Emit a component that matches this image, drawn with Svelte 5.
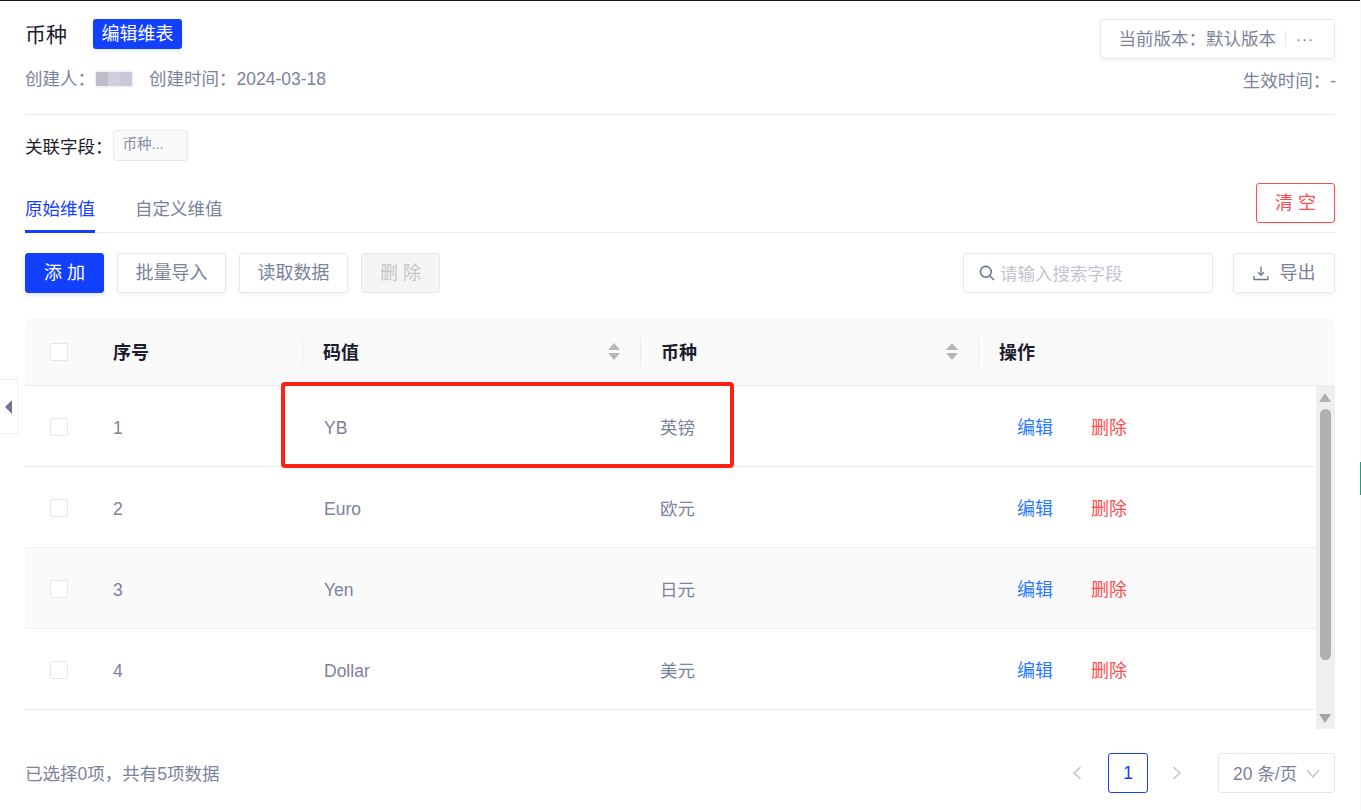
<script lang="ts">
  const rows = [
    { no: 1, code: 'YB', name: '英镑' },
    { no: 2, code: 'Euro', name: '欧元' },
    { no: 3, code: 'Yen', name: '日元' },
    { no: 4, code: 'Dollar', name: '美元' },
  ];
  const hoverRow = 3;
</script>

<div class="page">
  <header class="head">
    <div class="head-left">
      <div class="title-row">
        <h1>币种</h1>
        <span class="tag">编辑维表</span>
      </div>
      <div class="meta">
        <span>创建人：</span>
        <span class="blurred"></span>
        <span class="created">创建时间：2024-03-18</span>
      </div>
    </div>
    <div class="head-right">
      <div class="version">
        <span>当前版本：默认版本</span>
        <i class="version-sep"></i>
        <span class="dots">···</span>
      </div>
      <div class="effective">生效时间：-</div>
    </div>
  </header>

  <div class="relation">
    <span class="relation-label">关联字段：</span>
    <span class="relation-tag">币种...</span>
  </div>

  <div class="tabs">
    <span class="tab active">原始维值</span>
    <span class="tab">自定义维值</span>
    <button class="btn danger">清 空</button>
  </div>

  <div class="toolbar">
    <button class="btn primary">添 加</button>
    <button class="btn batch">批量导入</button>
    <button class="btn batch">读取数据</button>
    <button class="btn disabled">删 除</button>
    <div class="search">
      <svg width="18" height="18" viewBox="0 0 18 18" fill="none" stroke="#6f7590" stroke-width="1.6">
        <circle cx="7.8" cy="7.8" r="5.4" />
        <path d="M11.8 11.8 L16 16" />
      </svg>
      <span class="placeholder">请输入搜索字段</span>
    </div>
    <button class="btn export">
      <svg width="16" height="16" viewBox="0 0 16 16" fill="none" stroke="#6f7590" stroke-width="1.3">
        <path d="M8 1.5 V10 M5 7.3 L8 10.3 L11 7.3 M1 11 V14.5 H15 V11" />
      </svg>
      <span>导出</span>
    </button>
  </div>

  <section class="table">
    <div class="thead">
      <div class="th th-check"><i class="check"></i></div>
      <div class="th th-no"><span class="th-label">序号</span></div>
      <div class="th sep">
        <span class="th-label">码值</span>
        <span class="sort"><i class="up"></i><i class="down"></i></span>
      </div>
      <div class="th sep">
        <span class="th-label">币种</span>
        <span class="sort"><i class="up"></i><i class="down"></i></span>
      </div>
      <div class="th sep"><span class="th-label">操作</span></div>
    </div>
    <div class="tbody">
      <div class="rows">
        {#each rows as r (r.no)}
          <div class="tr" class:hover={r.no === hoverRow}>
            <div class="td-check"><i class="check"></i></div>
            <div class="td-no">{r.no}</div>
            <div class="td-code">{r.code}</div>
            <div class="td-name">{r.name}</div>
            <div class="td-ops">
              <span class="edit">编辑</span>
              <span class="del">删除</span>
            </div>
          </div>
        {/each}
      </div>
      <div class="scrollbar">
        <i class="arrow-up"></i>
        <i class="thumb"></i>
        <i class="arrow-down"></i>
      </div>
    </div>
    <div class="highlight"></div>
  </section>

  <footer class="foot">
    <span class="summary">已选择0项，共有5项数据</span>
    <div class="pager">
      <svg class="chev" width="12" height="16" viewBox="0 0 12 16" fill="none" stroke="#bfbfc4" stroke-width="1.3">
        <path d="M9.5 2 L3 8 L9.5 14" />
      </svg>
      <span class="page-no">1</span>
      <svg class="chev" width="12" height="16" viewBox="0 0 12 16" fill="none" stroke="#bfbfc4" stroke-width="1.3">
        <path d="M2.5 2 L9 8 L2.5 14" />
      </svg>
      <div class="size">
        <span class="size-label">20 条/页</span>
        <svg width="14" height="9" viewBox="0 0 14 9" fill="none" stroke="#bfbfc4" stroke-width="1.2">
          <path d="M1 1 L7 8 L13 1" />
        </svg>
      </div>
    </div>
  </footer>

  <div class="side-toggle"><i></i></div>
  <i class="green-edge"></i>
</div>

<style>
  :global(body) {
    background: #fafafa;
    overflow: hidden;
  }

  .page {
    position: relative;
    box-sizing: border-box;
    width: 1360px;
    height: 810px;
    padding: 18px 25px 0 25px;
    background: #fff;
    border-top: 1px solid #14141e;
    font-family: 'Liberation Sans', 'Noto Sans CJK SC', sans-serif;
    font-size: 17.5px;
    line-height: 26px;
    color: #7c829c;
  }

  .head {
    display: flex;
    justify-content: space-between;
    height: 95px;
    border-bottom: 1px solid #e9e9f2;
  }

  .title-row {
    display: flex;
    align-items: center;
    height: 30px;
    gap: 26px;
  }

  h1 {
    margin: 0;
    padding-top: 2px;
    font-size: 21px;
    font-weight: 400;
    color: #1c1c2b;
  }

  .tag {
    box-sizing: border-box;
    width: 89px;
    height: 30px;
    line-height: 31px;
    font-size: 18px;
    text-align: center;
    background: #1340ff;
    color: #fff;
    border-radius: 3px;
    box-shadow: 0 2px 4px rgba(19, 64, 255, 0.12);
  }

  .meta {
    display: flex;
    align-items: center;
    margin-top: 17px;
  }

  .blurred {
    width: 36px;
    height: 14px;
    margin-left: 1px;
    background: linear-gradient(90deg, #bfbdca 0 12px, #d0d0da 12px 24px, #c8c8d6 24px 36px);
    box-shadow: 0 0 3px rgba(200, 200, 215, 0.7);
  }

  .created {
    margin-left: 17px;
  }

  .head-right {
    display: flex;
    flex-direction: column;
    align-items: flex-end;
  }

  .version {
    box-sizing: border-box;
    display: flex;
    align-items: center;
    justify-content: flex-end;
    width: 235px;
    height: 40px;
    padding-right: 20px;
    border: 1px solid #e6e6f0;
    border-radius: 3px;
    box-shadow: 0 2px 4px rgba(120, 120, 160, 0.08);
  }

  .version-sep {
    width: 1px;
    height: 16px;
    margin: 0 10px 0 9px;
    background: #e6e6ec;
  }

  .dots {
    font-size: 15px;
    letter-spacing: 1px;
    color: #666b85;
  }

  .effective {
    margin-top: 9px;
    margin-right: -1px;
  }

  .relation {
    display: flex;
    align-items: center;
    height: 31px;
    margin-top: 15px;
    color: #1c1c2b;
  }

  .relation-label {
    padding-top: 2px;
  }

  .relation-tag {
    box-sizing: border-box;
    width: 75px;
    height: 31px;
    padding-left: 9px;
    line-height: 27px;
    font-size: 14.5px;
    color: #868ba3;
    background: #fafafa;
    border: 1px solid #e9e9f0;
    border-radius: 3px;
  }

  .tabs {
    position: relative;
    display: flex;
    align-items: flex-end;
    height: 50px;
    margin-top: 21px;
    gap: 40px;
    border-bottom: 1px solid #ececf1;
  }

  .tab {
    height: 36px;
    line-height: 24px;
    margin-bottom: -1px;
    box-sizing: border-box;
  }

  .tab.active {
    color: #1340ff;
    border-bottom: 3px solid #1340ff;
  }

  .btn {
    box-sizing: border-box;
    height: 40px;
    padding: 0;
    font: inherit;
    font-size: 18px;
    border: 1px solid #e6e6f0;
    border-radius: 3px;
    background: #fff;
    color: #7c829c;
    box-shadow: 0 2px 4px rgba(120, 120, 160, 0.08);
  }

  .btn.danger {
    width: 79px;
    margin-left: auto;
    margin-bottom: 9px;
    color: #ff4d4f;
    border-color: #ff4d4f;
  }

  .toolbar {
    display: flex;
    align-items: center;
    margin-top: 20px;
    gap: 13px;
  }

  .btn.primary {
    width: 79px;
    color: #fff;
    background: #1340ff;
    border-color: #1340ff;
    box-shadow: 0 2px 4px rgba(19, 64, 255, 0.15);
  }

  .btn.batch {
    width: 109px;
  }

  .btn.disabled {
    width: 79px;
    color: #c6c6c6;
    background: #f5f5f5;
    box-shadow: none;
  }

  .search {
    box-sizing: border-box;
    display: flex;
    align-items: center;
    gap: 4px;
    width: 250px;
    height: 40px;
    margin-left: auto;
    padding-left: 14px;
    color: #c4c4cc;
    border: 1px solid #e6e6f0;
    border-radius: 3px;
  }

  .placeholder {
    padding-top: 2px;
  }

  .btn.export {
    display: flex;
    align-items: center;
    justify-content: center;
    gap: 11px;
    width: 102px;
    margin-left: 7px;
  }

  .table {
    position: relative;
    margin-top: 25px;
  }

  .thead {
    display: grid;
    grid-template-columns: 63px 215px 338px 338px 356px;
    height: 68px;
    background: #fafafa;
    border-radius: 6px 6px 0 0;
    border-bottom: 1px solid #ededf1;
    box-sizing: border-box;
    font-size: 18px;
    font-weight: 700;
    color: #1c1c2e;
  }

  .th {
    position: relative;
    display: flex;
    align-items: center;
    padding-left: 20px;
  }

  .th-check,
  .th-no {
    padding-left: 25px;
  }

  .th-label {
    padding-top: 2px;
  }

  .sep::before {
    content: '';
    position: absolute;
    left: -1px;
    top: 20px;
    width: 1px;
    height: 28px;
    background: #ececec;
  }

  .sort {
    position: absolute;
    right: 21px;
    top: 25px;
    display: flex;
    flex-direction: column;
    gap: 3px;
  }

  .up,
  .down {
    width: 0;
    height: 0;
    border-left: 6px solid transparent;
    border-right: 6px solid transparent;
  }

  .up {
    border-bottom: 7px solid #b8b8b8;
  }

  .down {
    border-top: 7px solid #b8b8b8;
  }

  .check {
    display: block;
    box-sizing: border-box;
    width: 18px;
    height: 18px;
    background: #fff;
    border: 1px solid #e6e6ea;
    border-radius: 2px;
  }

  .tbody {
    display: flex;
    height: 343px;
  }

  .rows {
    width: 1291px;
  }

  .tr {
    display: grid;
    grid-template-columns: 63px 215px 337px 337px 339px;
    align-items: center;
    box-sizing: border-box;
    height: 81px;
    border-bottom: 1px solid #ededf1;
  }

  .tr.hover {
    background: #fafafa;
  }

  .td-check,
  .td-no {
    padding-left: 25px;
  }

  .td-check {
    padding-top: 1px;
  }

  .td-no,
  .td-code,
  .td-name,
  .td-ops {
    padding-top: 3px;
  }

  .td-code {
    padding-left: 21px;
  }

  .td-name {
    padding-left: 20px;
  }

  .td-ops {
    padding-left: 40px;
    font-size: 18px;
  }

  .edit {
    color: #2b7bff;
  }

  .del {
    margin-left: 33px;
    color: #ff4d4f;
  }

  .scrollbar {
    position: relative;
    width: 19px;
    background: #efefef;
  }

  .arrow-up,
  .arrow-down {
    position: absolute;
    left: 3px;
    width: 0;
    height: 0;
    border-left: 6.5px solid transparent;
    border-right: 6.5px solid transparent;
  }

  .arrow-up {
    top: 7px;
    border-bottom: 9px solid #b0b0b0;
  }

  .arrow-down {
    bottom: 6px;
    border-top: 9px solid #a4a4a4;
  }

  .thumb {
    position: absolute;
    left: 4px;
    top: 23px;
    width: 11px;
    height: 251px;
    background: #b0b0b0;
    border-radius: 6px;
  }

  .highlight {
    position: absolute;
    left: 256px;
    top: 64px;
    width: 453px;
    height: 86px;
    box-sizing: border-box;
    border: 4px solid #ff2012;
    border-radius: 4px;
  }

  .foot {
    display: flex;
    align-items: center;
    justify-content: space-between;
    height: 40px;
    margin-top: 24px;
  }

  .summary {
    padding-top: 2px;
  }

  .pager {
    display: flex;
    align-items: center;
  }

  .chev {
    display: block;
  }

  .page-no {
    box-sizing: border-box;
    width: 40px;
    height: 40px;
    margin: 0 23px 0 25px;
    line-height: 38px;
    text-align: center;
    color: #1340ff;
    border: 1px solid #1340ff;
    border-radius: 3px;
  }

  .size {
    box-sizing: border-box;
    display: flex;
    align-items: center;
    gap: 9px;
    width: 117px;
    height: 40px;
    margin-left: 35px;
    padding-left: 14px;
    border: 1px solid #e6e6f0;
    border-radius: 3px;
  }

  .size-label {
    padding-top: 2px;
  }

  .side-toggle {
    position: absolute;
    left: 0;
    top: 378px;
    width: 18px;
    height: 55px;
    box-sizing: border-box;
    display: flex;
    align-items: center;
    background: #fff;
    border: 1px solid #eeeef3;
    border-left: 0;
  }

  .side-toggle i {
    margin-left: 5px;
    width: 0;
    height: 0;
    border-top: 7px solid transparent;
    border-bottom: 7px solid transparent;
    border-right: 7px solid #70768f;
  }

  .green-edge {
    position: absolute;
    right: -1px;
    top: 461px;
    width: 1px;
    height: 33px;
    background: #14a37f;
  }
</style>
